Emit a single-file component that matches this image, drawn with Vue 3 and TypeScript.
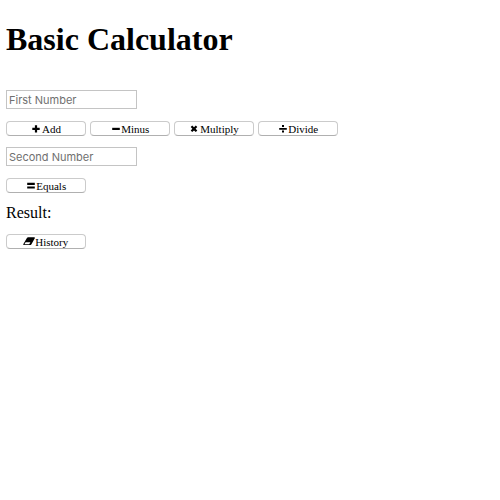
<script setup lang="ts">
import { ref } from 'vue'

type Operation = 'add' | 'minus' | 'multiply' | 'divide'

interface OperationButton {
  id: Operation
  label: string
  path: string
  gap: string
}

const operations: OperationButton[] = [
  { id: 'add', label: 'Add', path: 'M2.9 .2h2.2v2.6h2.6v2.2H5.1v2.6H2.9V5H.3V2.8h2.6z', gap: 'wide' },
  { id: 'minus', label: 'Minus', path: 'M.2 2.8h7.6v2.2H.2z', gap: 'narrow' },
  { id: 'multiply', label: 'Multiply', path: 'M2.2 .5 4 2.2 5.8 .5 7.3 2 5.6 3.8 7.3 5.6 5.8 7.1 4 5.4 2.2 7.1 .7 5.6 2.4 3.8 .7 2z', gap: '' },
  { id: 'divide', label: 'Divide', path: 'M.2 2.9h7.6v1.9H.2zM3 .1h2v2H3zM3 5.6h2v2H3z', gap: 'narrow' },
]

const first = ref('')
const second = ref('')
const operation = ref<Operation>('add')
const result = ref('')
const history = ref<string[]>([])
const showHistory = ref(false)

function calculate(): void {
  const a = Number(first.value)
  const b = Number(second.value)
  const actions: Record<Operation, () => number> = {
    add: () => a + b,
    minus: () => a - b,
    multiply: () => a * b,
    divide: () => a / b,
  }
  result.value = String(actions[operation.value]())
  history.value.push(result.value)
}
</script>

<template>
  <main class="calculator">
    <h1>Basic Calculator</h1>
    <input v-model="first" class="number" type="text" placeholder="First Number" />
    <div class="operations">
      <button v-for="item in operations" :key="item.id" type="button" @click="operation = item.id">
        <svg :class="['icon', item.gap]" viewBox="0 0 8 8"><path :d="item.path" /></svg>
        <span>{{ item.label }}</span>
      </button>
    </div>
    <input v-model="second" class="number" type="text" placeholder="Second Number" />
    <button class="equals" type="button" @click="calculate">
      <svg class="icon narrow" viewBox="0 0 8 8"><path d="M.2 .8h7.6v2.2H.2zM.2 4.4h7.6v2.2H.2z" /></svg>
      <span>Equals</span>
    </button>
    <p class="result">Result: {{ result }}</p>
    <button type="button" @click="showHistory = !showHistory">
      <svg class="eraser" viewBox="0 0 12 9">
        <path fill-rule="evenodd" d="M5.2 .2H11.2q1 .1.6 1.1L8.3 7.4q-.4.7-1.3.7H.9Q0 7.9.4 6.9L3.9 .9Q4.3 .2 5.2 .2zM2.6 5.2 1.4 7.2h4.8L7.4 5.2z" />
      </svg>
      <span>History</span>
    </button>
    <ul v-if="showHistory">
      <li v-for="(entry, index) in history" :key="index">{{ entry }}</li>
    </ul>
  </main>
</template>

<style>
body {
  background: #fff;
}
</style>

<style scoped>
.calculator {
  display: flex;
  flex-direction: column;
  align-items: flex-start;
  padding: 21px 6px;
  color: #000;
  font-family: "Liberation Serif", "Times New Roman", serif;
}

h1 {
  margin: 0 0 32px;
  font-size: 32px;
  line-height: 37px;
}

.number {
  box-sizing: border-box;
  width: 131px;
  height: 19px;
  padding: 2px 2px 1px;
  border: 1px solid #c4c4c4;
  border-radius: 0;
  background: #fff;
  font-family: Inter, sans-serif;
  font-size: 11px;
}

.number::placeholder {
  color: #707070;
}

.operations {
  display: flex;
  gap: 4px;
  margin: 12px 0 11px;
}

button {
  display: flex;
  align-items: center;
  justify-content: center;
  box-sizing: border-box;
  width: 80px;
  height: 15px;
  padding: 1px 0 0 1px;
  border: 1px solid #cbcbcb;
  border-bottom-color: #b0b0b0;
  border-radius: 4px;
  background: #fff;
  color: #000;
  font-family: "Liberation Serif", "Times New Roman", serif;
  font-size: 11px;
  line-height: 13px;
}

.icon {
  width: 8px;
  height: 8px;
  margin-right: 2px;
}

.narrow {
  margin-right: 1.5px;
}

.eraser {
  width: 12px;
  height: 9px;
  margin: -1px 0.5px 0 -2px;
}

.equals {
  margin-top: 12px;
}

.result {
  margin: 11px 0 12px;
  font-size: 16px;
  line-height: 18px;
}
</style>
